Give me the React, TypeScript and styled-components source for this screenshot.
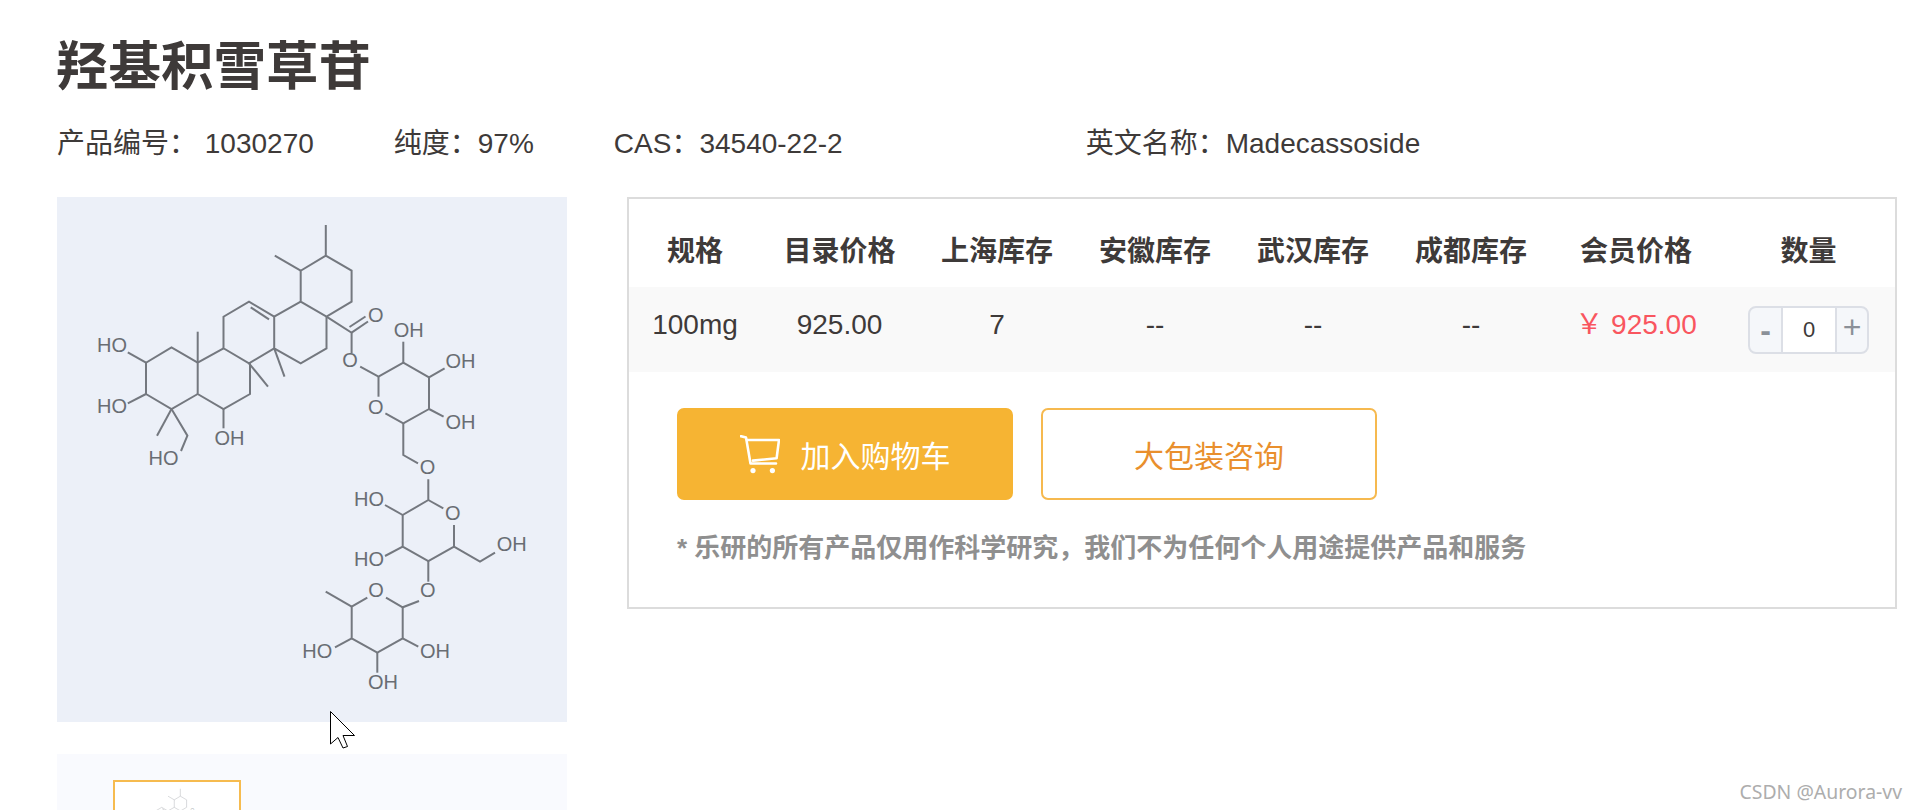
import React from "react";
import styled, { createGlobalStyle } from "styled-components";

const FONT = `"Liberation Sans", "Noto Sans CJK SC", sans-serif`;

const Global = createGlobalStyle`
  html, body { margin: 0; padding: 0; background: #fff; }
  body { font-family: ${FONT}; color: #3e3a39; }
`;

const Page = styled.div`
  position: relative;
  width: 1916px;
  height: 810px;
  overflow: hidden;
  box-sizing: border-box;
  padding: 37px 19px 0 57px;
  background: #fff;
`;

const Title = styled.h1`
  margin: 0 0 0 -1px;
  font-size: 52.5px;
  line-height: 60px;
  font-weight: 700;
  color: #3e3a39;
`;

const InfoRow = styled.div`
  display: flex;
  margin: 27px 0 33px;
  font-size: 28px;
  line-height: 40px;
  white-space: pre;
`;

const InfoItem = styled.span<{ $gap: number }>`
  margin-right: ${(p) => p.$gap}px;
`;

const Content = styled.div`
  display: flex;
  align-items: flex-start;
  gap: 60px;
`;

const Gallery = styled.div`
  width: 510px;
  flex: none;
  display: flex;
  flex-direction: column;
  gap: 32px;
`;

const MainImage = styled.div`
  height: 525px;
  background: #ecf0f8;
  svg { display: block; }
`;

const ThumbStrip = styled.div`
  height: 200px;
  box-sizing: border-box;
  padding: 26px 0 0 56px;
  background: #f9fafe;
`;

const Thumb = styled.div`
  width: 124px;
  height: 126px;
  border: 2px solid #f6bb4f;
  background: #fff;
  svg { display: block; opacity: 0.55; }
`;

const BuyBox = styled.section`
  width: 1270px;
  height: 412px;
  box-sizing: border-box;
  border: 2px solid #dcdcdc;
`;

const COLUMNS = "132px 157px 158px 158px 158px 158px 172px 173px";

const HeaderRow = styled.div`
  display: grid;
  grid-template-columns: ${COLUMNS};
  height: 88px;
  box-sizing: border-box;
  padding-top: 12px;
  align-items: center;
  text-align: center;
  font-size: 28px;
  font-weight: 700;
`;

const DataRow = styled.div`
  display: grid;
  grid-template-columns: ${COLUMNS};
  height: 85px;
  align-items: center;
  text-align: center;
  font-size: 28px;
  line-height: 40px;
  background: #f9f9f9;
`;

const Cell = styled.div<{ $price?: boolean }>`
  padding-bottom: 10px;
  color: ${(p) => (p.$price ? "#f9565f" : "#3e3a39")};
  white-space: pre;
`;

const StepperCell = styled.div`
  display: flex;
  justify-content: center;
`;

const Stepper = styled.div`
  display: flex;
  width: 121px;
  height: 48px;
  box-sizing: border-box;
  border: 2px solid #dcdfe6;
  border-radius: 8px;
  overflow: hidden;
  background: #f5f7fa;
`;

const StepButton = styled.div<{ $side: "left" | "right" }>`
  width: ${(p) => (p.$side === "left" ? 31 : 30)}px;
  display: flex;
  align-items: center;
  justify-content: center;
  padding-bottom: ${(p) => (p.$side === "left" ? 0 : 5)}px;
  box-sizing: border-box;
  font-size: 32px;
  font-weight: ${(p) => (p.$side === "left" ? 700 : 400)};
  line-height: 1;
  color: #8b9098;
`;

const StepValue = styled.div`
  flex: 1;
  display: flex;
  align-items: center;
  justify-content: center;
  background: #fff;
  border-left: 2px solid #dcdfe6;
  border-right: 2px solid #dcdfe6;
  font-size: 22px;
  color: #3e3a39;
`;

const Actions = styled.div`
  display: flex;
  gap: 28px;
  margin: 36px 0 0 48px;
`;

const ActionButton = styled.div<{ $primary?: boolean }>`
  width: 336px;
  height: 92px;
  box-sizing: border-box;
  display: flex;
  align-items: center;
  justify-content: center;
  gap: 21px;
  border-radius: 7px;
  font-size: 30px;
  border: 2px solid ${(p) => (p.$primary ? "#f6b433" : "#f6b94f")};
  background: ${(p) => (p.$primary ? "#f6b433" : "#fff")};
  color: ${(p) => (p.$primary ? "#fff" : "#e98f2d")};
`;

const Note = styled.p`
  margin: 30px 0 0 48px;
  font-size: 26px;
  line-height: 36px;
  font-weight: 700;
  color: #8f8f8f;
`;

const Cursor = styled.svg`
  position: absolute;
  left: 330px;
  top: 711px;
`;

const Watermark = styled.div`
  position: absolute;
  right: 14px;
  bottom: 6px;
  font-family: "Noto Sans", sans-serif;
  font-size: 19.4px;
  line-height: 24px;
  color: #adadad;
`;

const BONDS: string[] = [
  "M325.8 225V255.7L351.6 270.7V301.7L326.5 316.7L300.7 301.7V270.7L325.8 255.7",
  "M300.7 270.7L274.8 255.7",
  "M300.7 301.7L274.2 316.7V348.3L300.7 363.3L326.5 348.3V316.7",
  "M274.2 316.7L249 301.7L223.5 316.7V348.3L249 363.3L274.2 348.3",
  "M250.7 307.3L269 319.3",
  "M223.5 348.3L197.7 362.7V394L223.5 409L250 394V363.3",
  "M197.7 362.7L171.5 347.3L146 362.7V394L171.5 409L197.7 394",
  "M197.7 362.7V331.7",
  "M249 363.3L268 386.7",
  "M274.2 348.3L284.5 376.7",
  "M146 362.7L127.8 352.3",
  "M146 394L127.8 403.3",
  "M171.5 409L157 435.7",
  "M171.5 409L187.4 435.7L181 451",
  "M223.5 409V428.3",
  "M326.5 316.7L351.6 332.7V353.3",
  "M351.6 332.7L368 321.5",
  "M349.5 327L365.5 316.5",
  "M360.2 366.7L378.5 376.7L403.3 362.7L429 377.3V409L403.3 423.3L385.4 413.3",
  "M378.5 376.7V396.7",
  "M403.3 362.7V341.7",
  "M429 377.3L444.6 368.3",
  "M429 409L443.6 416.7",
  "M403.3 423.3V455L418 463.3",
  "M428.3 479.3V500L402.7 515V546.7L428.3 561L454 546.7V525",
  "M428.3 500L443.3 508.3",
  "M402.7 515L385 505",
  "M402.7 546.7L385 556",
  "M454 546.7L480 561.7L495 552.7",
  "M428.3 561V581.7",
  "M419 601L402.7 607.3L386 597.7",
  "M402.7 607.3V638.3L377.3 652.7L351.7 638.3V606.7L367.3 597.7",
  "M351.7 606.7L325.7 591.7",
  "M351.7 638.3L335 647.3",
  "M402.7 638.3L418.3 646.7",
  "M377.3 652.7V672.7",
];

const ATOMS: { x: number; y: number; t: string }[] = [
  { x: 112, y: 345, t: "HO" },
  { x: 112, y: 406, t: "HO" },
  { x: 163.5, y: 458, t: "HO" },
  { x: 229.5, y: 437.7, t: "OH" },
  { x: 375.7, y: 315, t: "O" },
  { x: 350, y: 360, t: "O" },
  { x: 408.8, y: 330, t: "OH" },
  { x: 460.5, y: 360.7, t: "OH" },
  { x: 460.5, y: 421.7, t: "OH" },
  { x: 375.7, y: 406.7, t: "O" },
  { x: 427.5, y: 467.3, t: "O" },
  { x: 369, y: 499, t: "HO" },
  { x: 452.7, y: 513.3, t: "O" },
  { x: 369, y: 559, t: "HO" },
  { x: 511.8, y: 544.3, t: "OH" },
  { x: 427.7, y: 590, t: "O" },
  { x: 376, y: 590, t: "O" },
  { x: 317.3, y: 650.7, t: "HO" },
  { x: 435, y: 650.7, t: "OH" },
  { x: 383, y: 681.7, t: "OH" },
];

const Molecule = ({ width, height }: { width: number; height: number }) => (
  <svg width={width} height={height} viewBox="57 197 510 525">
    <g fill="none" stroke="#74787f" strokeWidth="2">
      {BONDS.map((d) => (
        <path key={d} d={d} />
      ))}
    </g>
    <g
      fill="#696d73"
      fontFamily="Liberation Sans, sans-serif"
      fontSize="20"
      textAnchor="middle"
      dominantBaseline="central"
    >
      {ATOMS.map((a) => (
        <text key={`${a.x}-${a.y}`} x={a.x} y={a.y}>
          {a.t}
        </text>
      ))}
    </g>
  </svg>
);

const CartIcon = () => (
  <svg width="40" height="39" viewBox="0 0 40 39" fill="none" stroke="#fff" strokeWidth="2.6" strokeLinecap="round" strokeLinejoin="round">
    <path d="M1 1.2L6 2.4L10.5 28.5H36" />
    <path d="M7 5H39L36.6 23.3L13 25.6" />
    <circle cx="13" cy="35.6" r="2.6" fill="#fff" stroke="none" />
    <circle cx="32.4" cy="35.6" r="2.6" fill="#fff" stroke="none" />
  </svg>
);

const HEADERS = ["规格", "目录价格", "上海库存", "安徽库存", "武汉库存", "成都库存", "会员价格", "数量"];
const VALUES = ["100mg", "925.00", "7", "--", "--", "--"];

export default function App() {
  return (
    <Page>
      <Global />
      <Title>羟基积雪草苷</Title>
      <InfoRow>
        <InfoItem $gap={80}>产品编号： 1030270</InfoItem>
        <InfoItem $gap={80}>纯度：97%</InfoItem>
        <InfoItem $gap={243}>CAS：34540-22-2</InfoItem>
        <InfoItem $gap={0}>英文名称：Madecassoside</InfoItem>
      </InfoRow>
      <Content>
        <Gallery>
          <MainImage>
            <Molecule width={510} height={525} />
          </MainImage>
          <ThumbStrip>
            <Thumb>
              <Molecule width={124} height={127} />
            </Thumb>
          </ThumbStrip>
        </Gallery>
        <BuyBox>
          <HeaderRow>
            {HEADERS.map((h) => (
              <div key={h}>{h}</div>
            ))}
          </HeaderRow>
          <DataRow>
            {VALUES.map((v, i) => (
              <Cell key={i}>{v}</Cell>
            ))}
            <Cell $price>￥ 925.00</Cell>
            <StepperCell>
              <Stepper>
                <StepButton $side="left">-</StepButton>
                <StepValue>0</StepValue>
                <StepButton $side="right">+</StepButton>
              </Stepper>
            </StepperCell>
          </DataRow>
          <Actions>
            <ActionButton $primary>
              <CartIcon />
              <span>加入购物车</span>
            </ActionButton>
            <ActionButton>大包装咨询</ActionButton>
          </Actions>
          <Note>* 乐研的所有产品仅用作科学研究，我们不为任何个人用途提供产品和服务</Note>
        </BuyBox>
      </Content>
      <Cursor width="25" height="38" viewBox="0 0 25 38">
        <path d="M.5.5V33L8 26.5L13 37L17.5 35.5L13 24.5H24.5Z" fill="#fff" stroke="#000" strokeWidth="1" />
      </Cursor>
      <Watermark>CSDN @Aurora-vv</Watermark>
    </Page>
  );
}
